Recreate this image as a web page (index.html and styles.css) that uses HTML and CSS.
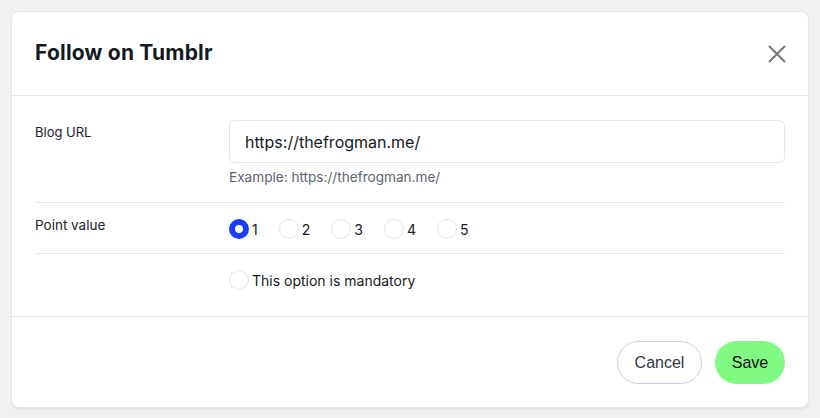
FILE: index.html
```html
<!DOCTYPE html>
<html>
<head>
<meta charset="utf-8">
<link rel="stylesheet" href="styles.css">
</head>
<body>
<div class="modal">
  <div class="modal-header">
    <h2 class="title">Follow on Tumblr</h2>
    <button class="close" aria-label="Close">
      <svg width="18" height="18" viewBox="0 0 18 18"><path d="M1 1L17 17M17 1L1 17" stroke="#767676" stroke-width="2" fill="none"/></svg>
    </button>
  </div>
  <div class="modal-body">
    <div class="row row-url">
      <div class="label">Blog URL</div>
      <div class="field">
        <div class="input">https://thefrogman.me/</div>
        <div class="help">Example: https://thefrogman.me/</div>
      </div>
    </div>
    <div class="row row-points">
      <div class="label">Point value</div>
      <div class="field radios">
        <label class="radio"><span class="circle checked"></span><span>1</span></label>
        <label class="radio"><span class="circle"></span><span>2</span></label>
        <label class="radio"><span class="circle"></span><span>3</span></label>
        <label class="radio"><span class="circle"></span><span>4</span></label>
        <label class="radio"><span class="circle"></span><span>5</span></label>
      </div>
    </div>
    <div class="row row-mand">
      <div class="label"></div>
      <div class="field">
        <label class="radio"><span class="circle"></span><span>This option is mandatory</span></label>
      </div>
    </div>
  </div>
  <div class="modal-footer">
    <button class="btn btn-cancel">Cancel</button>
    <button class="btn btn-save">Save</button>
  </div>
</div>
</body>
</html>
```
FILE: styles.css
```css
* { box-sizing: border-box; }
body {
  margin: 0;
  background: #f1f1f1;
  font-family: "Inter", "Liberation Sans", sans-serif;
  color: #1b2230;
}
.modal {
  margin: 11px;
  width: 798px;
  height: 397px;
  background: #fff;
  border: 1px solid #e2e7ef;
  border-radius: 8px;
  box-shadow: 0 2px 2px rgba(0,0,0,0.06);
  display: flex;
  flex-direction: column;
}
.modal-header {
  height: 84px;
  border-bottom: 1px solid #e2e7ef;
  display: flex;
  align-items: center;
  justify-content: space-between;
  padding: 0 22px 0 23px;
}
.title {
  margin: 0 0 0 0;
  font-size: 21px;
  font-weight: 700;
  color: #141a24;
  letter-spacing: 0.2px;
  position: relative;
  top: -1px;
}
.close {
  border: 0;
  background: none;
  padding: 0;
  width: 18px;
  height: 18px;
  display: flex;
}
.modal-body {
  padding: 0 23px;
  flex: 1;
}
.row {
  display: grid;
  grid-template-columns: 194px 1fr;
}
.label {
  font-size: 13px;
  color: #1b2230;
}
.row-url {
  padding: 24px 0 0;
  height: 107px;
  border-bottom: 1px solid #e5e8ee;
}
.row-url .label { padding-top: 4px; }
.input {
  height: 43px;
  border: 1px solid #e2e7ef;
  border-radius: 6px;
  padding: 0 15px;
  display: flex;
  align-items: center;
  font-size: 16px;
  color: #141a24;
}
.help {
  margin-top: 6px;
  font-size: 13.6px;
  color: #5b6472;
}
.row-points {
  height: 51px;
  align-items: center;
  border-bottom: 1px solid #e5e8ee;
}
.row-points .label { margin-top: -6px; font-size: 13.5px; }
.row-points .radios { margin-top: 2px; }
.radios { display: flex; }
.radio {
  display: flex;
  align-items: center;
  font-size: 14px;
  color: #141a24;
  margin-right: 21px;
}
.circle {
  width: 20px;
  height: 20px;
  border-radius: 50%;
  border: 1px solid #dfe4ec;
  margin-right: 3px;
  display: inline-block;
}
.circle.checked {
  border: 6px solid #1a3cff;
  background: #fff;
}
.row-mand {
  height: 62px;
  align-items: start;
  padding-top: 16px;
}
.modal-footer {
  border-top: 1px solid #e2e7ef;
  flex: 1;
  display: flex;
  justify-content: flex-end;
  align-items: flex-start;
  padding: 24px 23px 0;
  gap: 13px;
}
.btn {
  height: 43px;
  border-radius: 22px;
  font-family: "Liberation Sans", Arial, sans-serif;
  font-size: 16px;
  padding: 0;
}
.btn-cancel {
  background: #fff;
  border: 1px solid #c9d2e0;
  color: #2d3748;
  width: 85px;
}
.btn-save {
  background: #80fa82;
  border: 0;
  color: #111;
  width: 70px;
}
```
